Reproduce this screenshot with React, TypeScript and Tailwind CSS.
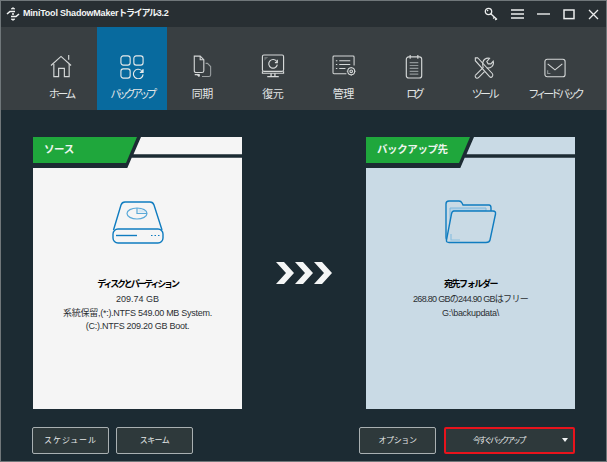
import React from "react";

const jp = "font-['Liberation_Sans','Noto_Sans_CJK_JP',sans-serif]";

function HomeIcon() {
  return (
    <svg width="23" height="25" viewBox="0 0 24 26" fill="none" stroke="#d5d8d8" strokeWidth="1.2">
      <path d="M1 12 L11.5 2.5 L22 12" />
      <path d="M4 10.5 V23.5 H9 V15 H15 V23.5 H20 V10.5" />
      <path d="M19.5 1 V6" />
    </svg>
  );
}
function BackupIcon() {
  return (
    <svg width="24" height="24" viewBox="0 0 26 26" fill="none" stroke="#e8eaea" strokeWidth="1.2">
      <rect x="1" y="1" width="10" height="10" rx="2.5" />
      <rect x="15" y="1" width="10" height="10" rx="2.5" />
      <rect x="1" y="15" width="10" height="10" rx="2.5" />
      <path d="M23.5 17 A5.2 5.2 0 1 0 25 21" />
      <path d="M25 15.5 V19 H21.5" fill="#e8eaea" />
    </svg>
  );
}
function SyncIcon() {
  return (
    <svg width="20" height="24" viewBox="0 0 22 26" fill="none" stroke="#d5d8d8" strokeWidth="1.2">
      <path d="M2.5 1 H9 L13 5 V17 Q13 19 11 19 H4.5 Q2.5 19 2.5 17 Z" />
      <path d="M9 1 V5 H13" />
      <path d="M15 9 H17 L20.5 12.5 V21.5 Q20.5 23.5 18.5 23.5 H11" stroke="#9ba0a2" />
      <path d="M3 21.5 H8 M8 23.5 L5.5 21 M8 23.5 V21" strokeWidth="1.4" />
    </svg>
  );
}
function RestoreIcon() {
  return (
    <svg width="24" height="25" viewBox="0 0 24 26" fill="none" stroke="#d5d8d8" strokeWidth="1.2">
      <rect x="1" y="1" width="22" height="17" rx="1.5" />
      <path d="M1 18 V20 H23 V18" />
      <path d="M10 20 V23 M14 20 V23 M6 23.5 H18" strokeWidth="1.4" />
      <path d="M16 8 A4.5 4.5 0 1 0 16.5 11" />
      <path d="M16.5 6 V9 H14" />
      <path d="M3 3 L7 3 L3 7 Z" fill="#6a7072" stroke="none" />
    </svg>
  );
}
function ManageIcon() {
  return (
    <svg width="25" height="23" viewBox="0 0 26 24" fill="none" stroke="#d5d8d8" strokeWidth="1.1" className="ml-[3px]">
      <path d="M15 19.5 H2 Q1 19.5 1 18.5 V2 Q1 1 2 1 H22 Q23 1 23 2 V11" />
      <path d="M4 6 H5.5 M4 10 H5.5 M4 14 H5.5 M7.5 6 H19 M7.5 10 H19 M7.5 14 H14" />
      <circle cx="20" cy="17" r="3.6" />
      <circle cx="20" cy="17" r="1.4" />
      <path d="M20 12.4 V13.4 M20 20.6 V21.6 M15.4 17 H16.4 M23.6 17 H24.6" />
    </svg>
  );
}
function LogIcon() {
  return (
    <svg width="18" height="25" viewBox="0 0 18 26" fill="none" stroke="#d5d8d8" strokeWidth="1.2">
      <rect x="1" y="3" width="16" height="22" rx="2.5" />
      <path d="M5 1 V5 M13 1 V5" />
      <path d="M4.5 9 H13.5 M4.5 12 H13.5 M4.5 15 H13.5 M4.5 18 H13.5 M4.5 21 H13.5" stroke="#8f9597" />
    </svg>
  );
}
function ToolIcon() {
  return (
    <svg width="21" height="22" viewBox="0 0 22 24" fill="none" stroke="#d5d8d8" strokeWidth="1.2" className="mt-[3px]">
      <path d="M1 1 L3.5 0.8 L19.5 18 Q21 20 19.5 21.5 Q18 23 16.5 21.5 L1 4 Z" />
      <path d="M1 20 L9.5 11.5 L9 8 Q9 3 13 1.5 Q15 1 16.5 1.5 L13.5 5 L15 7.5 L18 7.5 L20.5 4.5 Q21.5 8 19 10.5 Q16.5 12.5 13.5 12" />
      <path d="M1 20 Q0.5 22 2 23 Q3.5 23.5 4.5 22.5 L11 16" />
    </svg>
  );
}
function MailIcon() {
  return (
    <svg width="22" height="20" viewBox="0 0 24 21" fill="none" stroke="#d5d8d8" strokeWidth="1.2" className="mt-[2px]">
      <rect x="1" y="1" width="22" height="19" rx="2.5" />
      <path d="M4 6 L12 12.5 L20 6" />
      <path d="M4 13 V16.5 H7" stroke="#8f9597" />
    </svg>
  );
}

function NavItem({ icon, label, active, track }: { icon: React.ReactNode; label: string; active?: boolean; track: string }) {
  return (
    <div className={`flex h-[83px] w-[70.5px] flex-col items-center ${active ? "bg-[#086a9e]" : ""}`}>
      <div className="mt-[25px] flex h-[29px] items-center justify-center">{icon}</div>
      <div className={`mt-[6px] whitespace-nowrap text-[11px] leading-[14px] text-[#e3e6e6] ${track}`}>{label}</div>
    </div>
  );
}

function Card({ title, tone, icon, children }: { title: string; tone: string; icon: React.ReactNode; children: React.ReactNode }) {
  return (
    <div className={`relative flex h-[272px] w-[209px] flex-col items-center ${tone}`}>
      <div className="absolute left-0 top-0 h-[31px] w-full bg-[#1c2b33] [clip-path:polygon(0_0,108px_0,100.5px_17.3px,100%_17.3px,100%_20.7px,98.7px_20.7px,94.3px_100%,0_100%)]" />
      <div className="absolute left-0 top-0 flex h-[26px] w-[104px] items-center bg-[#1fa73c] pl-[11px] text-[10.5px] font-bold tracking-[-0.4px] text-[#eef5ee] [clip-path:polygon(0_0,100%_0,93px_100%,0_100%)]">
        {title}
      </div>
      <div className="mt-[63px] flex h-[44px] items-center justify-center">{icon}</div>
      <div className="mt-[34px] flex flex-col items-center text-center text-[9px] text-[#2b2f33]">{children}</div>
    </div>
  );
}

function Btn({ label, className = "" }: { label: string; className?: string }) {
  return (
    <div className={`flex h-[27px] items-center justify-center rounded-[2px] border border-[#a9b0b2] bg-[#2e393b] text-[8px] text-[#e4e7e7] ${className}`}>
      {label}
    </div>
  );
}

export default function App() {
  return (
    <div className={`flex h-[462px] w-[607px] flex-col overflow-hidden border border-[#70777a] bg-[#1c2b33] ${jp}`}>
      <div className="flex h-[26px] items-center bg-[#282f33] pl-[5px] pr-[7px]">
        <svg width="14" height="16" viewBox="0 0 14 16" fill="none" stroke="#f2f4f4" strokeWidth="1.6">
          <path d="M1 8 L4 5.5 H9 M13 8 L10 10.5 H5" />
          <path d="M7 1.5 L9 3 H5 Z M7 14.5 L5 13 H9 Z" fill="#f2f4f4" strokeWidth="0.6" />
          <circle cx="7" cy="8" r="1" fill="#f2f4f4" stroke="none" />
        </svg>
        <div className="ml-[3px] whitespace-nowrap text-[9px] font-bold tracking-[-0.2px] text-[#f4f6f6]">
          MiniTool ShadowMaker<span className="tracking-[-1.3px]">トライアル</span>3.2
        </div>
        <div className="ml-auto flex items-center gap-[13px]">
          <svg width="14" height="14" viewBox="0 0 14 14" fill="none" stroke="#eceeee" strokeWidth="1.3">
            <circle cx="4.5" cy="4.5" r="3.2" />
            <path d="M7 7 L13 12.5 M10.5 10.2 L9.2 11.5 M12.3 11.8 L11.2 13" />
            <circle cx="3.6" cy="3.6" r="0.8" fill="#eceeee" stroke="none" />
          </svg>
          <svg width="13" height="10" viewBox="0 0 13 10" stroke="#eceeee" strokeWidth="1.3">
            <path d="M0 1 H13 M0 5 H13 M0 9 H13" />
          </svg>
          <svg width="13" height="12" viewBox="0 0 13 12" stroke="#eceeee" strokeWidth="1.4">
            <path d="M0 6 H13" />
          </svg>
          <svg width="12" height="11" viewBox="0 0 12 11" fill="none" stroke="#eceeee" strokeWidth="1.5">
            <rect x="1" y="1" width="10" height="8.6" />
          </svg>
          <svg width="11" height="11" viewBox="0 0 11 11" stroke="#eceeee" strokeWidth="1.3">
            <path d="M1 1 L10 10 M10 1 L1 10" />
          </svg>
        </div>
      </div>
      <div className="flex h-[83px] bg-[#393f42] pl-[25px]">
        <NavItem icon={<HomeIcon />} label="ホーム" track="tracking-[-2.6px]" />
        <NavItem icon={<BackupIcon />} label="バックアップ" active track="tracking-[-3.8px]" />
        <NavItem icon={<SyncIcon />} label="同期" track="tracking-[-0.6px]" />
        <NavItem icon={<RestoreIcon />} label="復元" track="tracking-[-0.6px]" />
        <NavItem icon={<ManageIcon />} label="管理" track="tracking-[-0.6px]" />
        <NavItem icon={<LogIcon />} label="ログ" track="tracking-[-3.4px]" />
        <NavItem icon={<ToolIcon />} label="ツール" track="tracking-[-2.6px]" />
        <NavItem icon={<MailIcon />} label="フィードバック" track="tracking-[-3.4px]" />
      </div>
      <div className="flex flex-1 flex-col pl-[32px] pt-[27px]">
        <div className="flex items-center">
          <Card
            title="ソース"
            tone="bg-[#f5f5f5]"
            icon={
              <svg width="52" height="44" viewBox="0 0 52 44" fill="none" stroke="#0f7cc0" strokeWidth="1.2">
                <path d="M1.5 30 L9 5 Q10 2 13 2 H38 Q41 2 42 5 L50 30" strokeWidth="1.4" />
                <rect x="1" y="29" width="50" height="14" rx="5" strokeWidth="1.4" />
                <path d="M4 35.5 H25" strokeWidth="1.4" />
                <path d="M39 35.5 H40.5 M42.5 35.5 H44 M46 35.5 H47.5" strokeWidth="1.2" />
                <ellipse cx="25" cy="13.5" rx="10" ry="5.5" stroke="#5aa9d8" />
                <path d="M25 8 V13.5 H35" stroke="#5aa9d8" />
                <path d="M26.5 9 Q32 9 34 12.5 H26.5 Z" fill="#d8e9f4" stroke="none" />
              </svg>
            }
          >
            <div className="whitespace-nowrap text-[9px] font-bold leading-[12px] tracking-[-2.2px] text-black">ディスクとパーティション</div>
            <div className="mt-[3px] leading-[12px]">209.74 GB</div>
            <div className="mt-[2px] whitespace-nowrap leading-[13px] tracking-[-0.27px]">系統保留,(*:).NTFS 549.00 MB System.</div>
            <div className="whitespace-nowrap leading-[12px] tracking-[-0.26px]">(C:).NTFS 209.20 GB Boot.</div>
          </Card>
          <div className="flex w-[124px] justify-center pl-[2px]">
            <svg width="58" height="22" viewBox="0 0 58 22" fill="#f4f6f6">
              <path d="M0 0 H8 L18 11 L8 22 H0 L10 11 Z" />
              <path d="M19 0 H27 L37 11 L27 22 H19 L29 11 Z" />
              <path d="M38 0 H46 L56 11 L46 22 H38 L48 11 Z" />
            </svg>
          </div>
          <Card
            title="バックアップ先"
            tone="bg-[#c9dae5]"
            icon={
              <svg width="52" height="44" viewBox="0 0 52 44" fill="none" stroke="#0f7cc0" strokeWidth="1.4">
                <path d="M5 38 V8 H41 V11 H8 L5 30 Z" fill="#b4d3e8" stroke="#7fb8dc" strokeWidth="1" />
                <path d="M2.5 40 Q1 40 1 37 V4 Q1 1 4 1 H14 Q16 1 17 3 L18 5 H44 Q46 5 46 8 V11" />
                <path d="M9 11 H48 Q51 11 50.5 14 L45 40 Q44.5 42.5 41 42.5 H4 Q1 42.5 1.5 40 L6.5 14 Q7 11 9 11 Z" fill="#c9dae5" />
                <path d="M6 34 V40 H15" stroke="#8cc0e0" strokeWidth="1.2" />
              </svg>
            }
          >
            <div className="whitespace-nowrap text-[9px] font-bold leading-[12px] tracking-[-1.4px] text-black">宛先フォルダー</div>
            <div className="mt-[3px] whitespace-nowrap leading-[12px] tracking-[-0.7px]">268.80 GBの244.90 GBはフリー</div>
            <div className="mt-[2px] leading-[13px] tracking-[-0.3px]">G:\backupdata\</div>
          </Card>
        </div>
        <div className="-ml-px mt-[18px] flex">
          <Btn label="スケジュール" className="w-[77px] tracking-[0.9px]" />
          <Btn label="スキーム" className="ml-[7px] w-[77px] tracking-[-0.6px]" />
          <Btn label="オプション" className="ml-[166px] w-[77px] tracking-[-0.4px]" />
          <div className="relative ml-[8px] flex h-[27px] w-[131px] items-center justify-center rounded-[2px] border-2 border-[#e8131c] bg-[#2e393b] pr-[22px] text-[8px] tracking-[-2.3px] text-[#e4e7e7]">
            今すぐバックアップ
            <span className="absolute right-[5px] top-[9px] h-0 w-0 border-x-[3px] border-t-[4px] border-x-transparent border-t-[#f2f4f4]" />
          </div>
        </div>
      </div>
    </div>
  );
}
